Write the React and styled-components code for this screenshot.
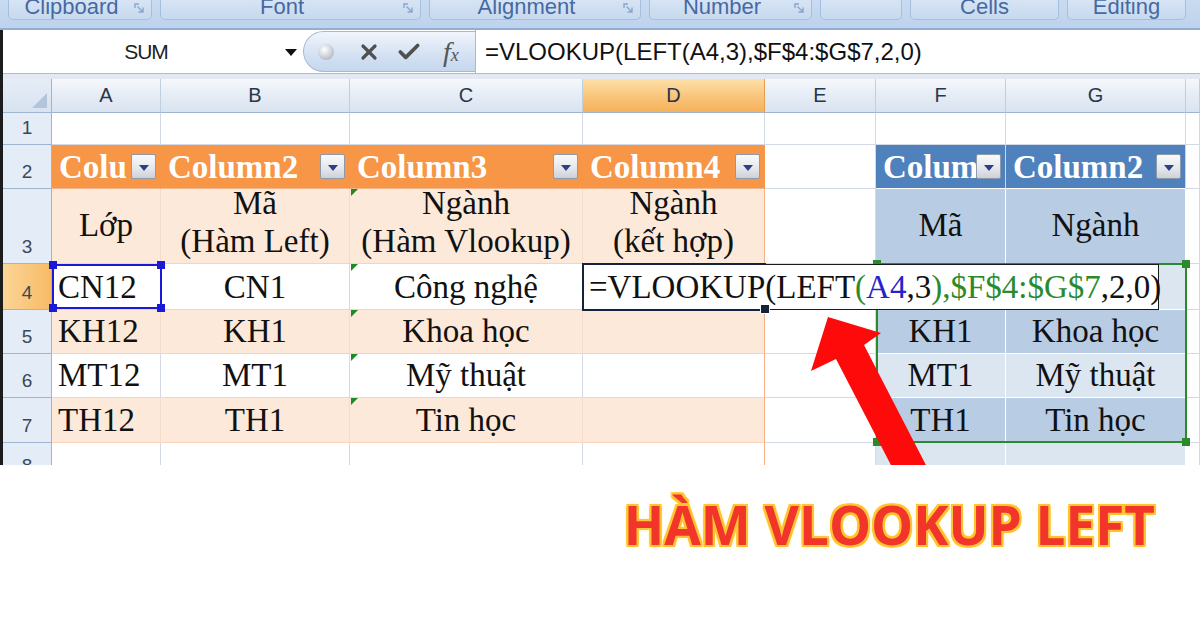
import React from 'react';
import styled, { createGlobalStyle, css } from 'styled-components';
import { X, Check } from 'lucide-react';

const GlobalStyle = createGlobalStyle`
  html, body {
    margin: 0;
    padding: 0;
    background: #fff;
  }
  #root {
    width: 1200px;
  }
`;

const SERIF = '"Liberation Serif", "Times New Roman", serif';
const SANS = '"Liberation Sans", Arial, sans-serif';

const PEACH = '#fde9d9';
const PEACH_LINE = '#f8d3b8';
const ORANGE = '#f79646';
const BLUE_HEAD = '#4f81bd';
const BLUE_DARK = '#b8cce4';
const BLUE_LIGHT = '#dce6f1';
const GRID = '#d3dae6';

const Page = styled.div`
  width: 1200px;
  height: 620px;
  overflow: hidden;
  background: #fff;
`;

const Window = styled.div`
  height: 465px;
  overflow: hidden;
  background: #fff;
`;

const Ribbon = styled.div`
  height: 30px;
  box-sizing: border-box;
  display: flex;
  gap: 8px;
  padding-left: 8px;
  background: linear-gradient(#c9dbf1, #bdd2ec);
  border-bottom: 2px solid #93aed2;
`;

const Group = styled.div`
  width: ${(p) => p.$w}px;
  height: 20px;
  box-sizing: border-box;
  display: flex;
  align-items: flex-end;
  overflow: hidden;
  background: linear-gradient(#d6e4f5, #c7d9ef);
  border: 1px solid #a4bfdf;
  border-top: none;
  border-radius: 0 0 5px 5px;
`;

const GroupLabel = styled.span`
  flex: 1;
  text-align: center;
  font-family: ${SANS};
  font-size: 22px;
  line-height: 22px;
  margin-bottom: 1px;
  color: #4669a2;
  white-space: nowrap;
`;

const Launcher = styled.svg`
  width: 10px;
  height: 10px;
  flex: none;
  margin: 0 7px 6px 0;
`;

const Body = styled.div`
  border-left: 3px solid #1c1c1c;
`;

const FormulaBar = styled.div`
  height: 43px;
  display: flex;
  background: #fff;
  border-bottom: 1px solid #a9bcd5;
`;

const NameBox = styled.div`
  width: 300px;
  display: flex;
  align-items: center;
  font-family: ${SANS};
  font-size: 21px;
  color: #1e1e1e;
`;

const NameText = styled.span`
  flex: 1;
  text-align: center;
  letter-spacing: -1px;
  padding-left: 4px;
`;

const DropArrow = styled.span`
  width: 0;
  height: 0;
  margin: 2px 6px 0 0;
  border-left: 6px solid transparent;
  border-right: 6px solid transparent;
  border-top: 7px solid #111;
`;

const Pill = styled.div`
  width: 172px;
  height: 41px;
  margin-top: 1px;
  box-sizing: border-box;
  display: flex;
  align-items: center;
  gap: 15px;
  padding-left: 14px;
  border-radius: 21px 0 0 21px;
  border: 1px solid #a5bad6;
  border-right: none;
  background: linear-gradient(#f1f5fb, #d3e1f2 60%, #c6d7ee);
  color: #505050;
`;

const Grip = styled.span`
  width: 16px;
  height: 16px;
  margin-right: 8px;
  border-radius: 50%;
  background: radial-gradient(circle at 40% 35%, #ffffff, #c9ced6 55%, #9aa3ae);
`;

const Fx = styled.span`
  margin-left: 6px;
  font-family: ${SERIF};
  font-style: italic;
  font-size: 28px;
  color: #555;
  sub {
    font-size: 18px;
    vertical-align: baseline;
  }
`;

const FormulaInput = styled.div`
  flex: 1;
  border-left: 1px solid #a5bad6;
  padding-left: 9px;
  font-family: ${SANS};
  font-size: 24px;
  line-height: 43px;
  color: #111;
  white-space: nowrap;
`;

const Band = styled.div`
  height: 5px;
  background: #e2e9f3;
`;

const SheetWrap = styled.div`
  position: relative;
`;

const Sheet = styled.div`
  display: grid;
  grid-template-columns: 49px 109px 189px 233px 182px 111px 130px 180px 14px;
  grid-template-rows: 34px 32px 44px 75px 46px 44px 44px 45px 40px;
  height: 386px;
  overflow: hidden;
`;

const Corner = styled.div`
  position: relative;
  background: linear-gradient(#e6edf7, #d8e3f1);
  border-right: 1px solid #9fb5cf;
  border-bottom: 1px solid #9fb5cf;
  &::after {
    content: '';
    position: absolute;
    right: 4px;
    bottom: 4px;
    border-style: solid;
    border-width: 0 0 15px 15px;
    border-color: transparent transparent #b3c5db transparent;
  }
`;

const ColHead = styled.div`
  display: flex;
  align-items: center;
  justify-content: center;
  background: ${(p) =>
    p.$active ? 'linear-gradient(#fde0a8, #f9c47a 55%, #f6b15a)' : 'linear-gradient(#f5f8fc, #e4ebf5 55%, #d9e3f0)'};
  border-right: 1px solid ${(p) => (p.$active ? '#e5a04c' : '#c0cfe0')};
  border-bottom: 1px solid #9fb5cf;
  font-family: ${SANS};
  font-size: 20px;
  color: #27364a;
`;

const RowHead = styled.div`
  display: flex;
  align-items: flex-end;
  justify-content: center;
  box-sizing: border-box;
  padding-bottom: 5px;
  background: ${(p) => (p.$active ? 'linear-gradient(90deg, #fbd597, #f7bb66)' : '#e4ecf7')};
  border-right: 1px solid #9fb5cf;
  border-bottom: 1px solid #9fb5cf;
  font-family: ${SANS};
  font-size: 19px;
  line-height: 22px;
  color: #3b4857;
`;

const Cell = styled.div`
  position: relative;
  min-width: 0;
  box-sizing: border-box;
  display: flex;
  align-items: ${(p) => (p.$middle ? 'center' : 'flex-end')};
  justify-content: ${(p) => (p.$left ? 'flex-start' : 'center')};
  padding: ${(p) => (p.$left ? '0 4px 3px 6px' : '0 4px 3px')};
  background: ${(p) => p.$bg || '#fff'};
  border-right: 1px solid ${(p) => p.$vline || GRID};
  border-bottom: 1px solid ${(p) => p.$hline || GRID};
  font-family: ${SERIF};
  font-size: 33px;
  line-height: 38px;
  color: #111;
  text-align: center;
  white-space: pre;
  overflow: hidden;

  ${(p) =>
    p.$flag &&
    css`
      &::before {
        content: '';
        position: absolute;
        left: 1px;
        top: 0;
        border-style: solid;
        border-width: 7px 7px 0 0;
        border-color: #1f8a24 transparent transparent transparent;
      }
    `}

  ${(p) =>
    p.$head &&
    css`
      align-items: center;
      justify-content: space-between;
      padding: 0 4px 0 7px;
      color: #fff;
      font-weight: 700;
    `}
`;

const HeadText = styled.span`
  flex: 1;
  min-width: 0;
  overflow: hidden;
  text-align: left;
`;

const DropBtn = styled.span`
  flex: none;
  width: 25px;
  height: 25px;
  box-sizing: border-box;
  display: flex;
  align-items: center;
  justify-content: center;
  border: 1px solid #8e9aab;
  border-radius: 2px;
  background: linear-gradient(#fafafa, #e3e6ea 60%, #cdd2d9);
  &::after {
    content: '';
    margin-top: 2px;
    border-left: 5px solid transparent;
    border-right: 5px solid transparent;
    border-top: 6px solid #2f3f86;
  }
`;

const RefBox = styled.div`
  position: absolute;
  left: ${(p) => p.$x}px;
  top: ${(p) => p.$y}px;
  width: ${(p) => p.$w}px;
  height: ${(p) => p.$h}px;
  box-sizing: border-box;
  border: 2px solid ${(p) => p.$color};
  pointer-events: none;
`;

const Handle = styled.span`
  position: absolute;
  width: 8px;
  height: 8px;
  background: ${(p) => p.$color};
  ${(p) => (p.$top ? 'top: -5px;' : 'bottom: -5px;')}
  ${(p) => (p.$right ? 'right: -5px;' : 'left: -5px;')}
`;

const EditBox = styled.div`
  position: absolute;
  left: 580px;
  top: 185px;
  width: 576px;
  height: 46px;
  box-sizing: border-box;
  display: flex;
  align-items: flex-end;
  padding: 0 0 3px 5px;
  background: #fff;
  border: 1.5px solid #1a1a1a;
  font-family: ${SERIF};
  font-size: 33px;
  line-height: 38px;
  color: #111;
  white-space: nowrap;
`;

const ActiveFrame = styled.div`
  position: absolute;
  left: 579px;
  top: 184px;
  width: 184px;
  height: 48px;
  box-sizing: border-box;
  border: 2.5px solid #15233a;
  border-right: none;
  &::after {
    content: '';
    position: absolute;
    right: -4px;
    bottom: -5px;
    width: 8px;
    height: 8px;
    background: #15233a;
    border: 1px solid #fff;
  }
`;

const Ref = styled.span`
  color: ${(p) => p.$c};
`;

const ArrowLayer = styled.svg`
  position: absolute;
  left: 0;
  top: 0;
  width: 1197px;
  height: 386px;
  pointer-events: none;
`;

const Caption = styled.div`
  display: flex;
  justify-content: flex-end;
  padding: 33px 45px 0 0;
`;

const CaptionText = styled.h1`
  margin: 0;
  font-family: "Open Sans", "Noto Sans", sans-serif;
  font-weight: 700;
  font-size: 53px;
  line-height: 1;
  color: #f2352b;
  text-shadow: -2px -2px 0 #ffc42f, 2px -2px 0 #ffc42f, -2px 2px 0 #ffc42f, 2px 2px 0 #ffc42f,
    0 -2px 0 #ffc42f, 0 2px 0 #ffc42f, -2px 0 0 #ffc42f, 2px 0 0 #ffc42f, 0 0 5px #ffd86e;
`;

const groups = [
  { w: 144, label: 'Clipboard', launcher: true },
  { w: 261, label: 'Font', launcher: true },
  { w: 212, label: 'Alignment', launcher: true },
  { w: 163, label: 'Number', launcher: true },
  { w: 82, label: '' },
  { w: 149, label: 'Cells' },
  { w: 119, label: 'Editing' },
];

const letters = ['A', 'B', 'C', 'D', 'E', 'F', 'G', ''];

const W = {};
const P = { bg: PEACH, hline: PEACH_LINE, vline: '#f5dcc9' };
const PD = { ...P, vline: '#f5b183' };
const WO = { hline: PEACH_LINE };
const WD = { hline: PEACH_LINE, vline: '#f5b183' };
const BD = { bg: BLUE_DARK, hline: '#fff', vline: '#fff' };
const BL = { bg: BLUE_LIGHT, hline: '#fff', vline: '#fff' };
const OH = { bg: ORANGE, vline: ORANGE, hline: '#f3b68a', head: true };
const BH = { bg: BLUE_HEAD, vline: '#c9d7ea', hline: '#fff', head: true };

const rows = [
  { n: 1, cells: [W, W, W, W, W, W, W, W] },
  {
    n: 2,
    cells: [
      { ...OH, t: 'Colu' },
      { ...OH, t: 'Column2' },
      { ...OH, t: 'Column3' },
      { ...OH, t: 'Column4' },
      W,
      { ...BH, t: 'Colum' },
      { ...BH, t: 'Column2' },
      W,
    ],
  },
  {
    n: 3,
    cells: [
      { ...P, t: 'Lớp', middle: true },
      { ...P, t: 'Mã\n(Hàm Left)' },
      { ...P, t: 'Ngành\n(Hàm Vlookup)', flag: true },
      { ...PD, t: 'Ngành\n(kết hợp)' },
      W,
      { ...BD, t: 'Mã', middle: true },
      { ...BD, t: 'Ngành', middle: true },
      W,
    ],
  },
  {
    n: 4,
    active: true,
    cells: [
      { ...WO, t: 'CN12', left: true },
      { ...WO, t: 'CN1' },
      { ...WO, t: 'Công nghệ', flag: true },
      WD,
      W,
      BL,
      BL,
      W,
    ],
  },
  {
    n: 5,
    cells: [
      { ...P, t: 'KH12', left: true },
      { ...P, t: 'KH1' },
      { ...P, t: 'Khoa học', flag: true },
      PD,
      W,
      { ...BD, t: 'KH1' },
      { ...BD, t: 'Khoa học' },
      W,
    ],
  },
  {
    n: 6,
    cells: [
      { ...WO, t: 'MT12', left: true },
      { ...WO, t: 'MT1' },
      { ...WO, t: 'Mỹ thuật', flag: true },
      WD,
      W,
      { ...BL, t: 'MT1' },
      { ...BL, t: 'Mỹ thuật' },
      W,
    ],
  },
  {
    n: 7,
    cells: [
      { ...P, t: 'TH12', left: true },
      { ...P, t: 'TH1' },
      { ...P, t: 'Tin học', flag: true },
      PD,
      W,
      { ...BD, t: 'TH1' },
      { ...BD, t: 'Tin học' },
      W,
    ],
  },
  { n: 8, cells: [W, W, W, { vline: '#f5b183' }, W, BL, BL, W] },
];

const LauncherIcon = () => (
  <Launcher viewBox="0 0 10 10">
    <path d="M1 5V1h4" fill="none" stroke="#8aa5c9" strokeWidth="1.4" />
    <path d="M3.5 3.5L8.5 8.5M9 4.5V9H4.5" fill="none" stroke="#8aa5c9" strokeWidth="1.4" />
  </Launcher>
);

const SheetCell = ({ c }) => (
  <Cell
    $bg={c.bg}
    $vline={c.vline}
    $hline={c.hline}
    $left={c.left}
    $middle={c.middle}
    $flag={c.flag}
    $head={c.head}
  >
    {c.head ? (
      <>
        <HeadText>{c.t}</HeadText>
        <DropBtn />
      </>
    ) : (
      c.t
    )}
  </Cell>
);

const App = () => {
  return (
    <>
      <GlobalStyle />
      <Page>
        <Window>
          <Ribbon>
            {groups.map((g, i) => (
              <Group key={i} $w={g.w}>
                <GroupLabel>{g.label}</GroupLabel>
                {g.launcher && <LauncherIcon />}
              </Group>
            ))}
          </Ribbon>
          <Body>
            <FormulaBar>
              <NameBox>
                <NameText>SUM</NameText>
                <DropArrow />
              </NameBox>
              <Pill>
                <Grip />
                <X size={24} strokeWidth={3.2} />
                <Check size={26} strokeWidth={3.4} />
                <Fx>
                  f<sub>x</sub>
                </Fx>
              </Pill>
              <FormulaInput>=VLOOKUP(LEFT(A4,3),$F$4:$G$7,2,0)</FormulaInput>
            </FormulaBar>
            <Band />
            <SheetWrap>
              <Sheet>
                <Corner />
                {letters.map((l, i) => (
                  <ColHead key={i} $active={l === 'D'}>
                    {l}
                  </ColHead>
                ))}
                {rows.map((r) => (
                  <React.Fragment key={r.n}>
                    <RowHead $active={r.active}>{r.n}</RowHead>
                    {r.cells.map((c, i) => (
                      <SheetCell key={i} c={c} />
                    ))}
                  </React.Fragment>
                ))}
              </Sheet>

              <RefBox $x={49} $y={185} $w={110} $h={45} $color="#1a1ad6">
                <Handle $top $color="#1a1ad6" />
                <Handle $top $right $color="#1a1ad6" />
                <Handle $color="#1a1ad6" />
                <Handle $right $color="#1a1ad6" />
              </RefBox>

              <RefBox $x={873} $y={184} $w={311} $h={180} $color="#2b8a2b">
                <Handle $top $color="#2b8a2b" />
                <Handle $top $right $color="#2b8a2b" />
                <Handle $color="#2b8a2b" />
                <Handle $right $color="#2b8a2b" />
              </RefBox>

              <EditBox>
                =VLOOKUP(LEFT<Ref $c="#2b8a2b">(</Ref>
                <Ref $c="#2424c8">A4</Ref>,3<Ref $c="#2b8a2b">),$F$4:$G$7</Ref>,2,0)
              </EditBox>
              <ActiveFrame />

              <ArrowLayer viewBox="0 0 1197 386">
                <polygon
                  points="825,238 878,254 861,266 925,390 890,390 833,280 808,292"
                  fill="#fe0a0a"
                />
              </ArrowLayer>
            </SheetWrap>
          </Body>
        </Window>
        <Caption>
          <CaptionText>HÀM VLOOKUP LEFT</CaptionText>
        </Caption>
      </Page>
    </>
  );
};

export default App;
